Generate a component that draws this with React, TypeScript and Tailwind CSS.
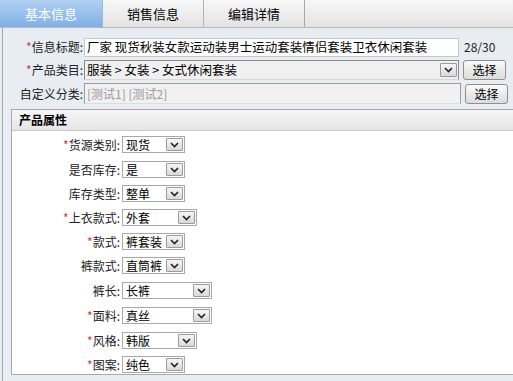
import React from "react";

type Attr = {
  label: string;
  value: string;
  width: number;
  gap: string;
  required?: boolean;
};

const attrs: Attr[] = [
  { label: "货源类别", value: "现货", width: 63, gap: "", required: true },
  { label: "是否库存", value: "是", width: 63, gap: "mt-[8px]" },
  { label: "库存类型", value: "整单", width: 63, gap: "mt-[7px]" },
  { label: "上衣款式", value: "外套", width: 75, gap: "mt-[7px]", required: true },
  { label: "款式", value: "裤套装", width: 63, gap: "mt-[7px]", required: true },
  { label: "裤款式", value: "直筒裤", width: 63, gap: "mt-[7px]" },
  { label: "裤长", value: "长裤", width: 90, gap: "mt-[8px]" },
  { label: "面料", value: "真丝", width: 90, gap: "mt-[8px]", required: true },
  { label: "风格", value: "韩版", width: 75, gap: "mt-[8px]", required: true },
  { label: "图案", value: "纯色", width: 63, gap: "mt-[7px]", required: true },
];

const font = {
  fontFamily: '"Noto Sans CJK SC", "Liberation Sans", sans-serif',
};

const Chevron = () => (
  <svg width="9" height="6" viewBox="0 0 9 6">
    <path d="M1 1 L4.5 4.5 L8 1" fill="none" stroke="#222" strokeWidth="1.6" />
  </svg>
);

const ArrowBox = ({ h = "h-[14px]" }: { h?: string }) => (
  <div
    className={`w-[17px] ${h} mr-[1px] flex items-center justify-center border border-[#9a9a9a] bg-gradient-to-b from-[#f6f6f6] to-[#d9d9d9] rounded-[1px]`}
  >
    <Chevron />
  </div>
);

const Select = ({ value, width }: { value: string; width: number }) => (
  <div
    className="h-[17px] flex items-center justify-between bg-white border border-[#a8a8a8] pl-[3px]"
    style={{ width }}
  >
    <span className="text-[12px] text-black leading-none">{value}</span>
    <ArrowBox h="h-[13px]" />
  </div>
);

const Label = ({ text, required }: { text: string; required?: boolean }) => (
  <span className="text-[12px] text-[#222] whitespace-nowrap">
    {required && <span className="text-[#d33]">*</span>}
    {text}:
  </span>
);

const Button = ({ text }: { text: string }) => (
  <button className="h-[20px] w-[43px] text-[12px] text-black border border-[#8f8f8f] rounded-[3px] bg-gradient-to-b from-[#fafafa] to-[#dcdcdc] leading-none">
    {text}
  </button>
);

const App = () => {
  return (
    <div
      className="w-[513px] h-[381px] overflow-hidden bg-[#e8edf4] text-[12px]"
      style={font}
    >
      <div className="flex h-[28px] border-b border-[#b8b8b8] bg-gradient-to-b from-[#f7f7f7] to-[#e3e3e3]">
        <div className="w-[103px] flex items-center justify-center text-[13px] text-white bg-gradient-to-b from-[#b2d0f2] to-[#7eb0e6] border-r border-[#9fb8d6]">
          基本信息
        </div>
        <div className="w-[101px] flex items-center justify-center text-[13px] text-black border-r border-[#b3b3b3]">
          销售信息
        </div>
        <div className="w-[101px] flex items-center justify-center text-[13px] text-black border-r border-[#a8a8a8]">
          编辑详情
        </div>
        <div className="flex-1" />
      </div>

      <div className="ml-[2px] border-l border-[#a9a9a9] h-full pt-[9px]">
        <div className="flex items-center h-[20px]">
          <div className="w-[80px] text-right">
            <Label text="信息标题" required />
          </div>
          <div className="w-[375px] h-[19px] ml-[1px] bg-white border border-[#c8c8c8] flex items-center pl-[2px] text-[12.5px] text-black">
            厂家 现货秋装女款运动装男士运动套装情侣套装卫衣休闲套装
          </div>
          <span className="ml-[5px] text-[#222]">28/30</span>
        </div>

        <div className="flex items-center h-[20px] mt-[3px]">
          <div className="w-[80px] text-right">
            <Label text="产品类目" required />
          </div>
          <div className="w-[375px] h-[20px] ml-[1px] bg-[#f0f0f0] border border-[#8a8a8a] border-b-[#d8d8d8] flex items-center justify-between pl-[2px] text-[12.5px] text-black">
            <span>服装 &gt; 女装 &gt; 女式休闲套装</span>
            <ArrowBox />
          </div>
          <div className="ml-[4px]">
            <Button text="选择" />
          </div>
        </div>

        <div className="flex items-center h-[21px] mt-[3px]">
          <div className="w-[80px] text-right">
            <Label text="自定义分类" />
          </div>
          <div className="w-[377px] h-[21px] ml-[1px] bg-[#f1f1f1] border border-[#9a9a9a] border-b-[#dcdcdc] flex items-center pl-[2px] text-[#9a9a9a]">
            [测试1] [测试2]
          </div>
          <div className="ml-[4px]">
            <Button text="选择" />
          </div>
        </div>

        <div className="ml-[8px] mt-[5px] border-l border-t border-b border-[#a9a9a9] bg-white h-[266px] overflow-hidden">
          <div className="h-[21px] flex items-center pl-[7px] font-bold text-[12px] text-black bg-gradient-to-b from-[#f6f6f6] to-[#e6e6e6] border-b border-[#c8c8c8]">
            产品属性
          </div>
          <div className="flex flex-col pt-[5px]">
            {attrs.map((a) => (
              <div key={a.label} className={`flex items-center h-[17px] ${a.gap}`}>
                <div className="w-[108px] text-right">
                  <Label text={a.label} required={a.required} />
                </div>
                <div className="ml-[2px]">
                  <Select value={a.value} width={a.width} />
                </div>
              </div>
            ))}
          </div>
        </div>
      </div>
    </div>
  );
};

export default App;
